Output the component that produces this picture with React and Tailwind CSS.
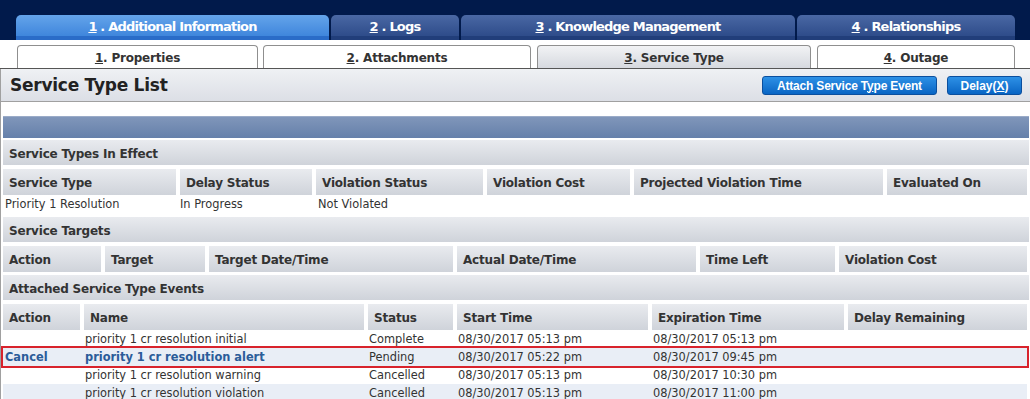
const font = { fontFamily: '"DejaVu Sans", Verdana, sans-serif' };

const mainTabs = [
  { n: "1", label: "Additional Information", w: "w-[313px]", active: true },
  { n: "2", label: "Logs", w: "w-[128px]" },
  { n: "3", label: "Knowledge Management", w: "w-[334px]" },
  { n: "4", label: "Relationships", w: "w-[218px]" },
];

const subTabs = [
  { n: "1", label: "Properties", w: "w-[241px]" },
  { n: "2", label: "Attachments", w: "w-[268px]" },
  { n: "3", label: "Service Type", w: "w-[274px]", active: true },
  { n: "4", label: "Outage", w: "w-[198px]" },
];

const effectCols = ["w-[173px]", "w-[132px]", "w-[167px]", "w-[143px]", "w-[249px]", "w-[140px]"];
const targetCols = ["w-[98px]", "w-[100px]", "w-[244px]", "w-[239px]", "w-[135px]", "w-[188px]"];
const eventCols = ["w-[77px]", "w-[280px]", "w-[85px]", "w-[191px]", "w-[192px]", "w-[179px]"];

const events = [
  ["", "priority 1 cr resolution initial", "Complete", "08/30/2017 05:13 pm", "08/30/2017 05:13 pm", ""],
  ["Cancel", "priority 1 cr resolution alert", "Pending", "08/30/2017 05:22 pm", "08/30/2017 09:45 pm", ""],
  ["", "priority 1 cr resolution warning", "Cancelled", "08/30/2017 05:13 pm", "08/30/2017 10:30 pm", ""],
  ["", "priority 1 cr resolution violation", "Cancelled", "08/30/2017 05:13 pm", "08/30/2017 11:00 pm", ""],
];

function SectionHeader({ children, className = "" }) {
  return (
    <div className={`h-[25px] flex items-center pl-[6px] pt-[2px] bg-linear-to-b from-[#e9ebef] to-[#cfd3da] text-[12px] font-bold text-[#333] tracking-[-0.2px] ${className}`}>
      {children}
    </div>
  );
}

function HeaderRow({ cols, labels, className = "" }) {
  return (
    <div className={`flex gap-[4px] h-[26px] ${className}`}>
      {labels.map((l, i) => (
        <div
          key={i}
          className={`${cols[i]} shrink-0 flex items-center pl-[6px] pt-[2px] bg-linear-to-b from-[#e9ebef] to-[#cfd3da] text-[12px] font-bold text-[#333] tracking-[-0.2px]`}
        >
          {l}
        </div>
      ))}
    </div>
  );
}

export default function App() {
  return (
    <div className="w-[1030px] h-[399px] overflow-hidden bg-white" style={font}>
      {/* top tabs */}
      <div className="h-[40px] bg-[#011a4b] pt-[15px] pl-[16px] flex gap-[2px]">
        {mainTabs.map((t) => (
          <div
            key={t.n}
            className={`${t.w} h-[25px] rounded-t-[5px] flex items-center justify-center text-white text-[13px] font-bold tracking-[-0.8px] border-b-[4px] pt-[2px] ${
              t.active
                ? "bg-linear-to-b from-[#64a4ea] to-[#3f86dc] border-[#2a6cc8]"
                : "bg-linear-to-b from-[#4a68a4] to-[#2e4c8a] border-[#213e7a]"
            }`}
          >
            <span className="underline">{t.n}</span>
            <span>&nbsp;. {t.label}</span>
          </div>
        ))}
      </div>

      {/* sub tabs */}
      <div className="h-[29px] bg-white pt-[5px] pl-[17px] flex border-b border-[#555]">
        {subTabs.map((t, i) => (
          <div
            key={t.n}
            className={`${t.w} ${i === 0 ? "" : i === 1 ? "ml-[5px]" : "ml-[6px]"} h-[23px] pt-[1px] rounded-t-[4px] border border-b-0 border-[#8f8f8f] flex items-center justify-center text-[12px] font-bold text-[#333] tracking-[-0.2px] ${
              t.active ? "bg-linear-to-b from-[#f2f3f5] to-[#d6d9df]" : "bg-white"
            }`}
          >
            <span className="underline">{t.n}</span>
            <span>. {t.label}</span>
          </div>
        ))}
      </div>

      {/* page header */}
      <div className="h-[33px] border-l border-[#a0a0a0] border-b bg-linear-to-b from-[#eff1f4] to-[#dcdfe6] flex items-center justify-between pl-[9px] pr-[8px]">
        <div className="text-[17px] font-bold text-[#222] tracking-[-0.25px] pt-[1px]">Service Type List</div>
        <div className="flex gap-[10px]" style={{ fontFamily: '"Liberation Sans", Arial, sans-serif' }}>
          <button className="h-[19px] w-[175px] rounded-[3px] border border-[#0b4f9e] bg-linear-to-b from-[#2d91e6] to-[#0865c4] text-white text-[12px] font-bold tracking-[-0.2px]">
            Attach Service T<span className="underline">y</span>pe Event
          </button>
          <button className="h-[19px] w-[75px] rounded-[3px] border border-[#0b4f9e] bg-linear-to-b from-[#2d91e6] to-[#0865c4] text-white text-[12px] font-bold">
            Delay(<span className="underline">X</span>)
          </button>
        </div>
      </div>

      {/* content */}
      <div className="border-l border-[#a0a0a0] pl-[2px] pr-[1px] pt-[14px] h-[300px]">
        <div className="h-[22px] border-t border-[#9aabc8] bg-linear-to-b from-[#8096ba] to-[#6580aa]" />

        <SectionHeader className="mt-[2px]">Service Types In Effect</SectionHeader>
        <HeaderRow
          className="mt-[4px]"
          cols={effectCols}
          labels={["Service Type", "Delay Status", "Violation Status", "Violation Cost", "Projected Violation Time", "Evaluated On"]}
        />
        <div className="flex gap-[4px] h-[18px] items-center pt-[1px] text-[11.4px] text-[#333]">
          {["Priority 1 Resolution", "In Progress", "Not Violated", "", "", ""].map((v, i) => (
            <div key={i} className={`${effectCols[i]} shrink-0 ${i === 0 ? "pl-[2px]" : i === 1 ? "pl-0" : "pl-[2px]"}`}>
              {v}
            </div>
          ))}
        </div>

        <SectionHeader className="mt-[4px] h-[24px]">Service Targets</SectionHeader>
        <HeaderRow
          className="mt-[4px]"
          cols={targetCols}
          labels={["Action", "Target", "Target Date/Time", "Actual Date/Time", "Time Left", "Violation Cost"]}
        />

        <SectionHeader className="mt-[3px]">Attached Service Type Events</SectionHeader>
        <HeaderRow
          className="mt-[4px]"
          cols={eventCols}
          labels={["Action", "Name", "Status", "Start Time", "Expiration Time", "Delay Remaining"]}
        />
        {events.map((r, ri) => (
          <div
            key={ri}
            className={`flex gap-[4px] h-[18px] items-center pt-[1px] text-[11.4px] text-[#333] w-[1024px] ${
              ri % 2 === 1 ? "bg-[#e9eef6]" : "bg-white"
            } ${ri === 1 ? "ring-2 ring-[#d8232c] relative" : ""}`}
          >
            {r.map((v, i) => (
              <div
                key={i}
                className={`${eventCols[i]} shrink-0 pl-[1px] whitespace-nowrap ${
                  ri === 1 && i < 2 ? "font-bold text-[#2b5c99]" : ""
                } ${i === 0 ? "pl-[2px]" : ""}`}
              >
                {v}
              </div>
            ))}
          </div>
        ))}
      </div>
    </div>
  );
}
